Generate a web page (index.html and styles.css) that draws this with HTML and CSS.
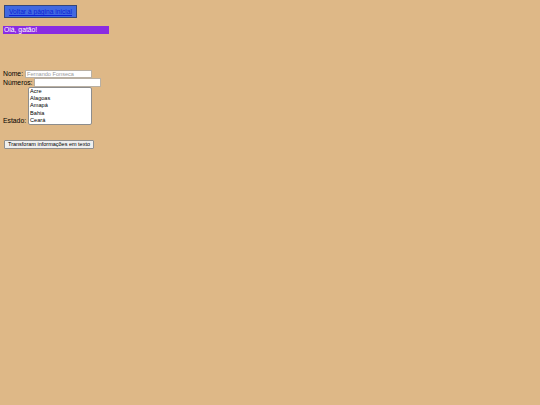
FILE: index.html
```html
<!DOCTYPE html>
<html lang="pt-BR">
<head>
<meta charset="utf-8">
<title>Formulário</title>
<link rel="stylesheet" href="styles.css">
</head>
<body>
<div class="page">
  <button class="back-btn"><a class="back-link" href="#">Voltar à página inicial</a></button>
  <div class="greeting">Olá, gatão!</div>
  <form class="form">
    <div class="row">
      <label class="label" for="nome">Nome:</label>
      <input class="field field-nome" id="nome" type="text" placeholder="Fernando Fonseca">
    </div>
    <div class="row">
      <label class="label" for="numeros">Números:</label>
      <input class="field field-num" id="numeros" type="text">
    </div>
    <div class="row row-end">
      <label class="label" for="estado">Estado:</label>
      <select class="states" id="estado" size="5">
        <option>Acre</option>
        <option>Alagoas</option>
        <option>Amapá</option>
        <option>Bahia</option>
        <option>Ceará</option>
        <option>Distrito Federal</option>
      </select>
    </div>
    <button class="submit-btn" type="button">Transforam informações em texto</button>
  </form>
</div>
</body>
</html>
```

FILE: styles.css
```css
html, body {
  margin: 0;
  padding: 0;
  background: #deb887;
}

.page {
  padding: 5px 3px;
  font-family: "Liberation Sans", Arial, sans-serif;
  font-size: 6.8px;
  color: #000;
}

.back-btn {
  display: block;
  box-sizing: border-box;
  margin: 0 0 0 1px;
  width: 73px;
  height: 13px;
  padding: 0;
  border: 1px solid #33467a;
  background: #4169e1;
  font-family: "Liberation Sans", Arial, sans-serif;
  font-size: 6.67px;
  line-height: 11px;
  text-align: center;
}

.back-link {
  color: #0b1fd6;
  text-decoration: underline;
}

.greeting {
  margin-top: 8px;
  width: 106px;
  height: 8px;
  line-height: 8px;
  background: #8a2be2;
  color: #fff;
  padding-left: 1px;
  box-sizing: border-box;
}

.form {
  margin-top: 36px;
}

.row {
  display: flex;
  align-items: center;
  gap: 2px;
  line-height: 8px;
}

.row-end {
  align-items: flex-end;
}

.label {
  white-space: nowrap;
}

.field {
  box-sizing: border-box;
  margin: 0;
  width: 67px;
  height: 8px;
  padding: 0 1px;
  border: 1px solid #b9b0a3;
  background: #fff;
  font-family: "Liberation Sans", Arial, sans-serif;
  font-size: 5.6px;
  outline: none;
}

.field::placeholder {
  color: #9a9a9a;
}

.field-num {
  height: 9px;
}

.states {
  box-sizing: border-box;
  margin: 0;
  width: 64px;
  height: 38px;
  padding: 0;
  border: 1px solid #8d8d8d;
  background: #fff;
  font-family: "Liberation Sans", Arial, sans-serif;
  font-size: 5.6px;
  overflow: hidden;
}

.states option {
  padding: 0 1px;
  height: 7.2px;
  line-height: 7.2px;
}

.submit-btn {
  display: block;
  box-sizing: border-box;
  margin: 15px 0 0 1px;
  width: 90px;
  height: 9px;
  padding: 0;
  border: 1px solid #8f8f8f;
  border-radius: 1px;
  background: #efefef;
  font-family: "Liberation Sans", Arial, sans-serif;
  font-size: 5.5px;
  line-height: 7px;
  color: #000;
  text-align: center;
  white-space: nowrap;
}
```
